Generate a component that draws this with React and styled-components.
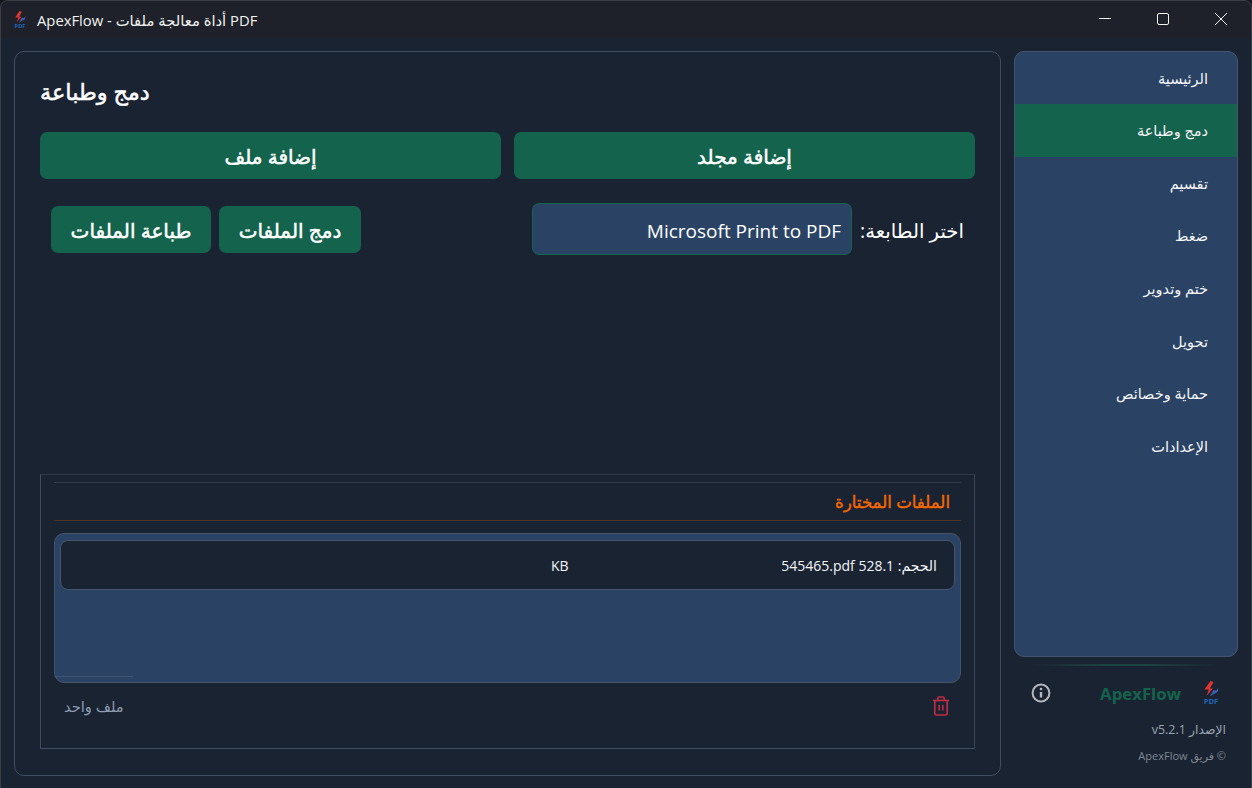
import React from 'react';
import styled, { createGlobalStyle } from 'styled-components';

const GlobalStyle = createGlobalStyle`
  html, body {
    margin: 0;
    padding: 0;
    background: #14171d;
    overflow: hidden;
  }
  * {
    box-sizing: border-box;
  }
`;

const navItems = ['الرئيسية', 'دمج وطباعة', 'تقسيم', 'ضغط', 'ختم وتدوير', 'تحويل', 'حماية وخصائص', 'الإعدادات'];

const Window = styled.div`
  width: 1252px;
  height: 788px;
  display: flex;
  flex-direction: column;
  background: #1a2332;
  border: 1px solid #3b3e44;
  border-bottom: 0;
  border-radius: 8px 8px 0 0;
  overflow: hidden;
  font-family: "Open Sans", "DejaVu Sans", sans-serif;
  color: #fff;
`;

const TitleBar = styled.div`
  height: 37px;
  flex: none;
  display: flex;
  align-items: center;
  padding-left: 13px;
  background: #1e2129;
  font-size: 14.8px;
`;

const TitleText = styled.span`
  margin-left: 11px;
  color: #f2f2f2;
`;

const WindowControls = styled.div`
  margin-left: auto;
  display: flex;
  height: 100%;
  padding-right: 1px;
`;

const ControlButton = styled.div`
  width: 58px;
  height: 100%;
  display: flex;
  align-items: center;
  justify-content: center;
  padding-bottom: 2px;
`;

const Body = styled.div`
  flex: 1;
  min-height: 0;
  display: flex;
  gap: 13px;
  padding: 13px 13px 12px 13px;
`;

const MainCard = styled.main`
  flex: 1;
  min-width: 0;
  display: flex;
  flex-direction: column;
  padding: 0 25px 26px 25px;
  border: 1px solid #414d60;
  border-radius: 10px;
  background: #1a2332;
`;

const Heading = styled.h1`
  margin: 23px 0 0 0;
  height: 33px;
  font-size: 22.4px;
  line-height: 33px;
  font-weight: 400;
  -webkit-text-stroke: 0.5px #fff;
  color: #fff;
`;

const TopActions = styled.div`
  display: flex;
  flex-direction: row-reverse;
  gap: 13px;
  margin-top: 24px;
`;

const ActionButton = styled.button`
  flex: ${(p) => (p.$wide ? 1 : 'none')};
  width: ${(p) => (p.$width ? `${p.$width}px` : 'auto')};
  height: 47px;
  padding: 2px 0 0 0;
  border: 0;
  border-radius: 7px;
  background: #14634c;
  color: #fff;
  font-family: inherit;
  font-size: 20px;
  font-weight: 400;
  -webkit-text-stroke: 0.5px #fff;
`;

const PrintRow = styled.div`
  display: flex;
  align-items: center;
  margin-top: 24px;
  padding: 0 11px;
  height: 52px;
`;

const PrintButtons = styled.div`
  display: flex;
  gap: 8px;
`;

const PrinterPicker = styled.div`
  margin-left: auto;
  display: flex;
  align-items: center;
  gap: 8px;
`;

const PrinterSelect = styled.div`
  width: 320px;
  height: 52px;
  display: flex;
  align-items: center;
  justify-content: flex-end;
  padding: 3px 10px 0 0;
  border: 1px solid #14634c;
  border-radius: 7px;
  background: #2a4365;
  font-size: 19px;
`;

const PrinterLabel = styled.span`
  direction: rtl;
  padding-top: 3px;
  font-size: 19.7px;
`;

const FilesBox = styled.section`
  margin-top: auto;
  height: 275px;
  display: flex;
  flex-direction: column;
  padding: 7px 13px 0 13px;
  border: 1px solid #414d60;
  border-top-color: #2d3747;
  border-right-color: #3a4556;
`;

const FilesHeader = styled.div`
  height: 39px;
  display: flex;
  align-items: center;
  justify-content: flex-end;
  padding-right: 11px;
  border-top: 1px solid #2f3a4b;
  border-bottom: 1px solid #4f3428;
  color: #f56a00;
  font-size: 16.6px;
  font-weight: 400;
  -webkit-text-stroke: 0.4px #f56a00;
`;

const FileList = styled.div`
  position: relative;
  height: 150px;
  margin-top: 12px;
  padding: 6px 5px;
  border: 1px solid #465469;
  border-radius: 10px;
  background: #2a4365;
`;

const ScrollTrace = styled.div`
  position: absolute;
  left: 0;
  bottom: 5px;
  width: 78px;
  height: 1px;
  background: #3f5573;
`;

const FileRow = styled.div`
  height: 50px;
  display: flex;
  align-items: center;
  padding: 0 17px 0 0;
  border: 1px solid #46536a;
  border-radius: 8px;
  background: #1a2332;
  font-size: 14px;
  color: #f2f5f8;
`;

const SizeUnit = styled.span`
  margin-left: 490px;
`;

const FileInfo = styled.span`
  margin-left: auto;
  direction: rtl;
`;

const FilesFooter = styled.div`
  flex: 1;
  display: flex;
  align-items: center;
  justify-content: space-between;
  padding: 0 11px 0 10px;
  margin-bottom: 19px;
  font-size: 14.7px;
  color: #8d9cb0;
`;

const SideColumn = styled.aside`
  width: 224px;
  flex: none;
  display: flex;
  flex-direction: column;
`;

const Nav = styled.nav`
  height: 606px;
  flex: none;
  border: 1px solid #46556d;
  border-radius: 10px;
  background: #2a4365;
  overflow: hidden;
`;

const NavItem = styled.div`
  height: 52.6px;
  display: flex;
  align-items: center;
  justify-content: flex-end;
  padding-right: 29px;
  font-size: 14.5px;
  color: #f4f6f8;
  background: ${(p) => (p.$active ? '#14634c' : 'transparent')};

  &:first-child {
    margin-top: -0.2px;
  }
`;

const GlowLine = styled.div`
  height: 2px;
  margin: 7px 16px 0 16px;
  background: linear-gradient(90deg, transparent, #1b4444 40%, #1b4444 60%, transparent);
`;

const BrandRow = styled.div`
  display: flex;
  align-items: center;
  height: 26px;
  margin-top: 14px;
  padding: 0 19px 0 17px;
`;

const BrandName = styled.span`
  margin-left: auto;
  margin-right: 22px;
  color: #14634c;
  font-size: 16.8px;
  font-weight: 700;
`;

const VersionText = styled.div`
  margin-top: 15px;
  direction: rtl;
  padding-right: 12px;
  font-size: 12.4px;
  color: #9aa3af;
`;

const CopyrightText = styled.div`
  margin-top: 10px;
  padding-right: 12px;
  direction: rtl;
  font-size: 11px;
  color: #7f8894;
`;

const AppLogo = ({ size }) => (
  <svg width={size} height={size * 1.5} viewBox="0 0 16 24">
    <path d="M7.5 0 L1.5 8.5 L6 8.5 L3.5 15 L10 7.5 L6.8 7.5 L10.5 1 Z" fill="#e5352f" />
    <path d="M10.5 9 L13 9.5 L15.5 7 L14.5 11 L11 13 L6.5 15.5 L9 12 Z" fill="#3f5fb5" />
    <text x="8" y="23" textAnchor="middle" fontSize="7.5" fontWeight="700" fill="#1e66b8" fontFamily="Open Sans">PDF</text>
  </svg>
);

const TrashIcon = () => (
  <svg width="18" height="20" viewBox="0 0 18 20" fill="none" stroke="#c42c43" strokeWidth="1.6">
    <path d="M1 4.5 H17" />
    <path d="M5.8 4.5 V2.4 Q5.8 1 7.2 1 H10.8 Q12.2 1 12.2 2.4 V4.5" />
    <path d="M2.8 4.5 V17 Q2.8 19 4.8 19 H13.2 Q15.2 19 15.2 17 V4.5" />
    <path d="M7.2 9 V14.5 M10.8 9 V14.5" />
  </svg>
);

const InfoIcon = () => (
  <svg width="20" height="20" viewBox="0 0 20 20" fill="none" stroke="#b4b8bd" strokeWidth="2">
    <circle cx="10" cy="10" r="8.4" />
    <path d="M10 9 V14.5" strokeWidth="2.4" />
    <circle cx="10" cy="6" r="1.3" fill="#b4b8bd" stroke="none" />
  </svg>
);

const App = () => {
  return (
    <Window>
      <GlobalStyle />
      <TitleBar>
        <AppLogo size={12} />
        <TitleText>ApexFlow - أداة معالجة ملفات PDF</TitleText>
        <WindowControls>
          <ControlButton>
            <svg width="12" height="12" viewBox="0 0 12 12" stroke="#f2f2f2"><path d="M0 5.5 H12" /></svg>
          </ControlButton>
          <ControlButton>
            <svg width="12" height="12" viewBox="0 0 12 12" fill="none" stroke="#f2f2f2"><rect x="0.5" y="0.5" width="11" height="11" rx="1.5" /></svg>
          </ControlButton>
          <ControlButton>
            <svg width="12" height="12" viewBox="0 0 12 12" stroke="#f2f2f2"><path d="M0 0 L12 12 M12 0 L0 12" /></svg>
          </ControlButton>
        </WindowControls>
      </TitleBar>
      <Body>
        <MainCard>
          <Heading>دمج وطباعة</Heading>
          <TopActions>
            <ActionButton $wide>إضافة مجلد</ActionButton>
            <ActionButton $wide>إضافة ملف</ActionButton>
          </TopActions>
          <PrintRow>
            <PrintButtons>
              <ActionButton $width={160}>طباعة الملفات</ActionButton>
              <ActionButton $width={142}>دمج الملفات</ActionButton>
            </PrintButtons>
            <PrinterPicker>
              <PrinterSelect>Microsoft Print to PDF</PrinterSelect>
              <PrinterLabel>اختر الطابعة:</PrinterLabel>
            </PrinterPicker>
          </PrintRow>
          <FilesBox>
            <FilesHeader>الملفات المختارة</FilesHeader>
            <FileList>
              <FileRow>
                <SizeUnit>KB</SizeUnit>
                <FileInfo>الحجم: 528.1 <bdi>545465.pdf</bdi></FileInfo>
              </FileRow>
              <ScrollTrace />
            </FileList>
            <FilesFooter>
              <span>ملف واحد</span>
              <TrashIcon />
            </FilesFooter>
          </FilesBox>
        </MainCard>
        <SideColumn>
          <Nav>
            {navItems.map((item) => (
              <NavItem key={item} $active={item === 'دمج وطباعة'}>{item}</NavItem>
            ))}
          </Nav>
          <GlowLine />
          <BrandRow>
            <InfoIcon />
            <BrandName>ApexFlow</BrandName>
            <AppLogo size={16} />
          </BrandRow>
          <VersionText>الإصدار v5.2.1</VersionText>
          <CopyrightText>© فريق ApexFlow</CopyrightText>
        </SideColumn>
      </Body>
    </Window>
  );
};

export default App;
